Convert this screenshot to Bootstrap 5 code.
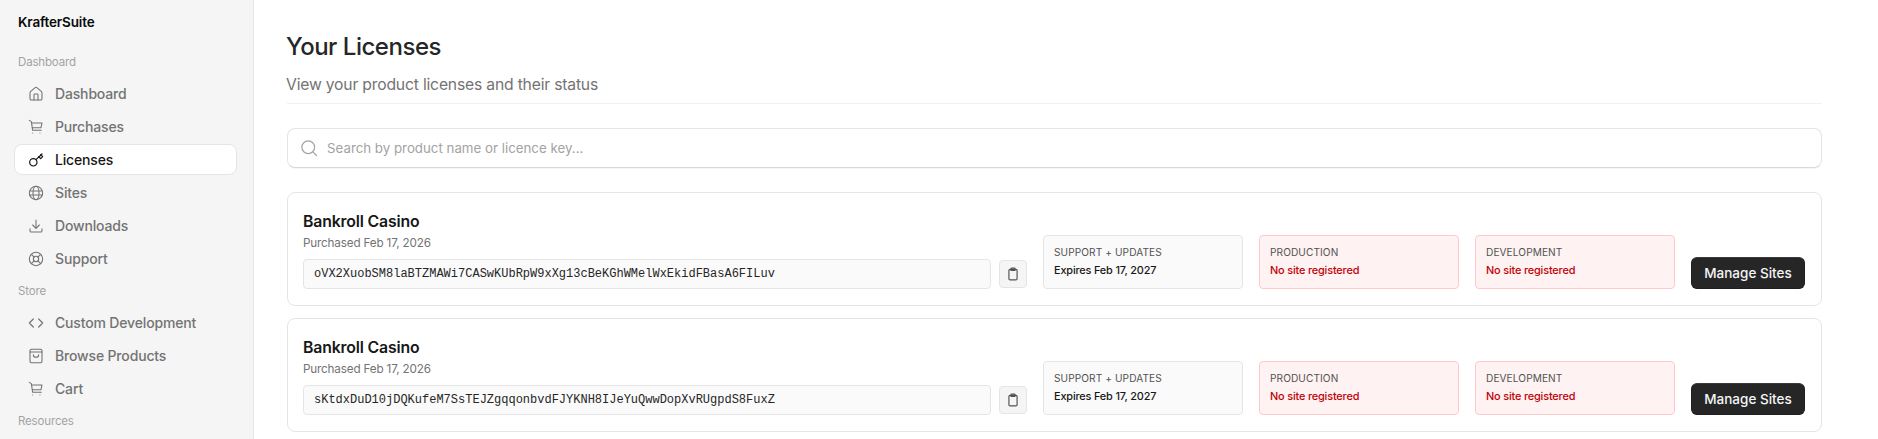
<!DOCTYPE html>
<html lang="en"><head><meta charset="utf-8"><title>Your Licenses</title>
<link href="https://cdn.jsdelivr.net/npm/bootstrap@5.3.0/dist/css/bootstrap.min.css" rel="stylesheet">
<style>
html,body{height:100%;overflow:hidden}
body{font-family:Inter,"Noto Sans",sans-serif;background:#fff;color:#171717;letter-spacing:-.01em}
.shell{height:439px;overflow:hidden}
.side{width:254px;flex:none;background:#f5f5f5;border-right:1px solid #e5e5e5;padding:13px 15px 0 14px}
.brand{font-size:13.5px;font-weight:600;color:#0a0a0a;padding-left:4px;height:18px;line-height:18px;margin-bottom:22px}
.grp{font-size:11.5px;color:#a3a3a3;padding-left:4px;height:18px;line-height:18px;margin:0 0 7px}
.grp.later{margin-top:6px}
.side-link{height:31px;margin-bottom:2px;border:1px solid transparent;border-radius:8px;padding:0 12px 0 13px;gap:11px;font-size:14px;font-weight:500;color:#737373;text-decoration:none;width:223px}
.side-link svg{width:16px;height:16px;flex:none}
.side-link.on{background:#fff;border-color:#e5e5e5;color:#171717}
.body-main{padding:32px 56px 0 33px;min-width:0}
.ttl{font-size:24px;line-height:30px;font-weight:500;color:#262626;margin:0 0 12px -1px;letter-spacing:-.02em}
.sub{font-size:15.700px;line-height:22px;color:#737373;margin:0 0 0 -1px;letter-spacing:-.012em}
.rule{border-bottom:1px solid #f0f0f0;padding-bottom:7px;margin-bottom:24px}
.find{height:40px;border:1px solid #e5e5e5;border-bottom-color:#d8d8d8;border-radius:8px;padding:0 12px;gap:9px;margin-bottom:24px;box-shadow:0 1px 1px rgba(0,0,0,.04)}
.find svg{width:18px;height:18px;color:#a3a3a3}
.find input{border:0;outline:0;padding:1px 0 0;flex:1;font-size:13.300px;color:#171717}
.find input::placeholder{color:#a3a3a3}
.lic{height:114px;border:1px solid #e5e5e5;border-radius:8px;padding:16px;margin-bottom:12px;gap:16px;align-items:flex-end}
.lic>.flex-grow-1{margin-left:-1px}
.nm{font-size:15.800px;line-height:20px;font-weight:600;color:#171717;margin:0 0 3px;letter-spacing:-.01em}
.pur{font-size:11.700px;line-height:16px;color:#737373;margin-bottom:8px}
.keyline{gap:8px}
.keybox{flex:1;height:30px;background:#fafafa;border:1px solid #e5e5e5;border-radius:4px;padding:0 10px;font-family:"Liberation Mono",monospace;font-size:12px;letter-spacing:0;color:#262626;line-height:28px}
.copy{width:28px;height:28px;background:#f5f5f5;border:1px solid #e5e5e5;border-radius:4px;padding:0;color:#525252}
.copy svg{width:14px;height:14px}
.stat{width:200px;height:54px;flex:none;border:1px solid #e5e5e5;background:#fafafa;border-radius:4px;padding:8px 10px}
.stat.bad{background:#fef2f2;border-color:#ffc9c9}
.lbl{font-size:10.100px;line-height:16px;color:#525252;letter-spacing:.01em;text-transform:uppercase}
.val{font-size:10.900px;line-height:16px;font-weight:500;color:#171717;margin-top:2px}
.bad .val{color:#c10007}
.mng{height:32px;width:114px;flex:none;background:#262626;color:#f5f5f5;border:1px solid #1f1f1f;border-top-color:#3a3a3a;border-radius:6px;font-size:13.500px;font-weight:500;padding:0;letter-spacing:0}
.mng:hover{background:#262626;color:#f5f5f5}
</style></head><body>
<div class="shell d-flex">
<aside class="side">
<div class="brand">KrafterSuite</div>
<div class="grp">Dashboard</div>
<nav class="d-flex flex-column">
<a class="side-link d-flex align-items-center" href="#"><svg viewBox="0 0 24 24" fill="none" stroke="currentColor" stroke-width="1.6" stroke-linecap="round" stroke-linejoin="round"><path d="M15 21v-8a1 1 0 0 0-1-1h-4a1 1 0 0 0-1 1v8"/><path d="M3 10a2 2 0 0 1 .7-1.5l7-6a2 2 0 0 1 2.600 0l7 6A2 2 0 0 1 21 10v9a2 2 0 0 1-2 2H5a2 2 0 0 1-2-2z"/></svg>Dashboard</a>
<a class="side-link d-flex align-items-center" href="#"><svg viewBox="0 0 24 24" fill="none" stroke="currentColor" stroke-width="1.6" stroke-linecap="round" stroke-linejoin="round"><path d="M2 2l3 2 2 13h13"/><path d="M5.400 6H21l-1.500 7H6.600"/><path d="M7 21h.01M18 21h.01"/></svg>Purchases</a>
<a class="side-link on d-flex align-items-center" href="#"><svg viewBox="0 0 24 24" fill="none" stroke="currentColor" stroke-width="1.8" stroke-linecap="round" stroke-linejoin="round"><circle cx="8" cy="15.500" r="5.500"/><path d="M12 11.500L21 3"/><path d="M16 7l3 3 3-3-3-3"/></svg>Licenses</a>
<a class="side-link d-flex align-items-center" href="#"><svg viewBox="0 0 24 24" fill="none" stroke="currentColor" stroke-width="1.6" stroke-linecap="round" stroke-linejoin="round"><circle cx="12" cy="12" r="10"/><ellipse cx="12" cy="12" rx="4.500" ry="10"/><path d="M2.500 9h19M2.500 15h19"/></svg>Sites</a>
<a class="side-link d-flex align-items-center" href="#"><svg viewBox="0 0 24 24" fill="none" stroke="currentColor" stroke-width="1.6" stroke-linecap="round" stroke-linejoin="round"><path d="M12 3v12"/><path d="M7 10.500l5 5 5-5"/><path d="M3 16v3a2 2 0 0 0 2 2h14a2 2 0 0 0 2-2v-3"/></svg>Downloads</a>
<a class="side-link d-flex align-items-center" href="#"><svg viewBox="0 0 24 24" fill="none" stroke="currentColor" stroke-width="1.6" stroke-linecap="round" stroke-linejoin="round"><circle cx="12" cy="12" r="10"/><circle cx="12" cy="12" r="4"/><path d="M5 5l4.200 4.200M14.800 14.800L19 19M19 5l-4.200 4.200M9.200 14.800L5 19"/></svg>Support</a>
</nav>
<div class="grp later">Store</div>
<nav class="d-flex flex-column">
<a class="side-link d-flex align-items-center" href="#"><svg viewBox="0 0 24 24" fill="none" stroke="currentColor" stroke-width="1.8" stroke-linecap="round" stroke-linejoin="round"><path d="M8 6l-6 6 6 6M16 6l6 6-6 6"/></svg>Custom Development</a>
<a class="side-link d-flex align-items-center" href="#"><svg viewBox="0 0 24 24" fill="none" stroke="currentColor" stroke-width="1.6" stroke-linecap="round" stroke-linejoin="round"><rect x="3" y="2" width="18" height="20" rx="2"/><path d="M3 6h18"/><path d="M8 10a4 4 0 0 0 8 0"/></svg>Browse Products</a>
<a class="side-link d-flex align-items-center" href="#"><svg viewBox="0 0 24 24" fill="none" stroke="currentColor" stroke-width="1.6" stroke-linecap="round" stroke-linejoin="round"><path d="M2 2l3 2 2 13h13"/><path d="M5.400 6H21l-1.500 7H6.600"/><path d="M7 21h.01M18 21h.01"/></svg>Cart</a>
</nav>
<div class="grp later">Resources</div>
</aside>
<main class="body-main flex-grow-1">
<div class="rule"><h1 class="ttl">Your Licenses</h1><p class="sub">View your product licenses and their status</p></div>
<div class="find d-flex align-items-center"><svg viewBox="0 0 24 24" fill="none" stroke="currentColor" stroke-width="1.6" stroke-linecap="round"><circle cx="11" cy="11" r="8.500"/><path d="M17.500 17.500L22 22"/></svg><input type="text" placeholder="Search by product name or licence key..."></div>
<section class="lic d-flex">
<div class="flex-grow-1"><h2 class="nm">Bankroll Casino</h2><div class="pur">Purchased Feb 17, 2026</div><div class="keyline d-flex align-items-center"><div class="keybox">oVX2XuobSM8laBTZMAWi7CASwKUbRpW9xXg13cBeKGhWMelWxEkidFBasA6FILuv</div><button class="copy btn d-flex align-items-center justify-content-center" type="button" aria-label="Copy"><svg viewBox="0 0 24 24" fill="none" stroke="currentColor" stroke-width="2" stroke-linejoin="round"><rect x="5" y="4" width="14" height="18" rx="2"/><rect x="8.500" y="2" width="7" height="4" rx="1"/></svg></button></div></div>
<div class="stat"><div class="lbl">Support + Updates</div><div class="val">Expires Feb 17, 2027</div></div>
<div class="stat bad"><div class="lbl">Production</div><div class="val">No site registered</div></div>
<div class="stat bad"><div class="lbl">Development</div><div class="val">No site registered</div></div>
<button class="mng btn" type="button">Manage Sites</button>
</section>
<section class="lic d-flex">
<div class="flex-grow-1"><h2 class="nm">Bankroll Casino</h2><div class="pur">Purchased Feb 17, 2026</div><div class="keyline d-flex align-items-center"><div class="keybox">sKtdxDuD10jDQKufeM7SsTEJZgqqonbvdFJYKNH8IJeYuQwwDopXvRUgpdS8FuxZ</div><button class="copy btn d-flex align-items-center justify-content-center" type="button" aria-label="Copy"><svg viewBox="0 0 24 24" fill="none" stroke="currentColor" stroke-width="2" stroke-linejoin="round"><rect x="5" y="4" width="14" height="18" rx="2"/><rect x="8.500" y="2" width="7" height="4" rx="1"/></svg></button></div></div>
<div class="stat"><div class="lbl">Support + Updates</div><div class="val">Expires Feb 17, 2027</div></div>
<div class="stat bad"><div class="lbl">Production</div><div class="val">No site registered</div></div>
<div class="stat bad"><div class="lbl">Development</div><div class="val">No site registered</div></div>
<button class="mng btn" type="button">Manage Sites</button>
</section>
</main>
</div>
<script src="https://cdn.jsdelivr.net/npm/bootstrap@5.3.0/dist/js/bootstrap.bundle.min.js"></script>
</body></html>
